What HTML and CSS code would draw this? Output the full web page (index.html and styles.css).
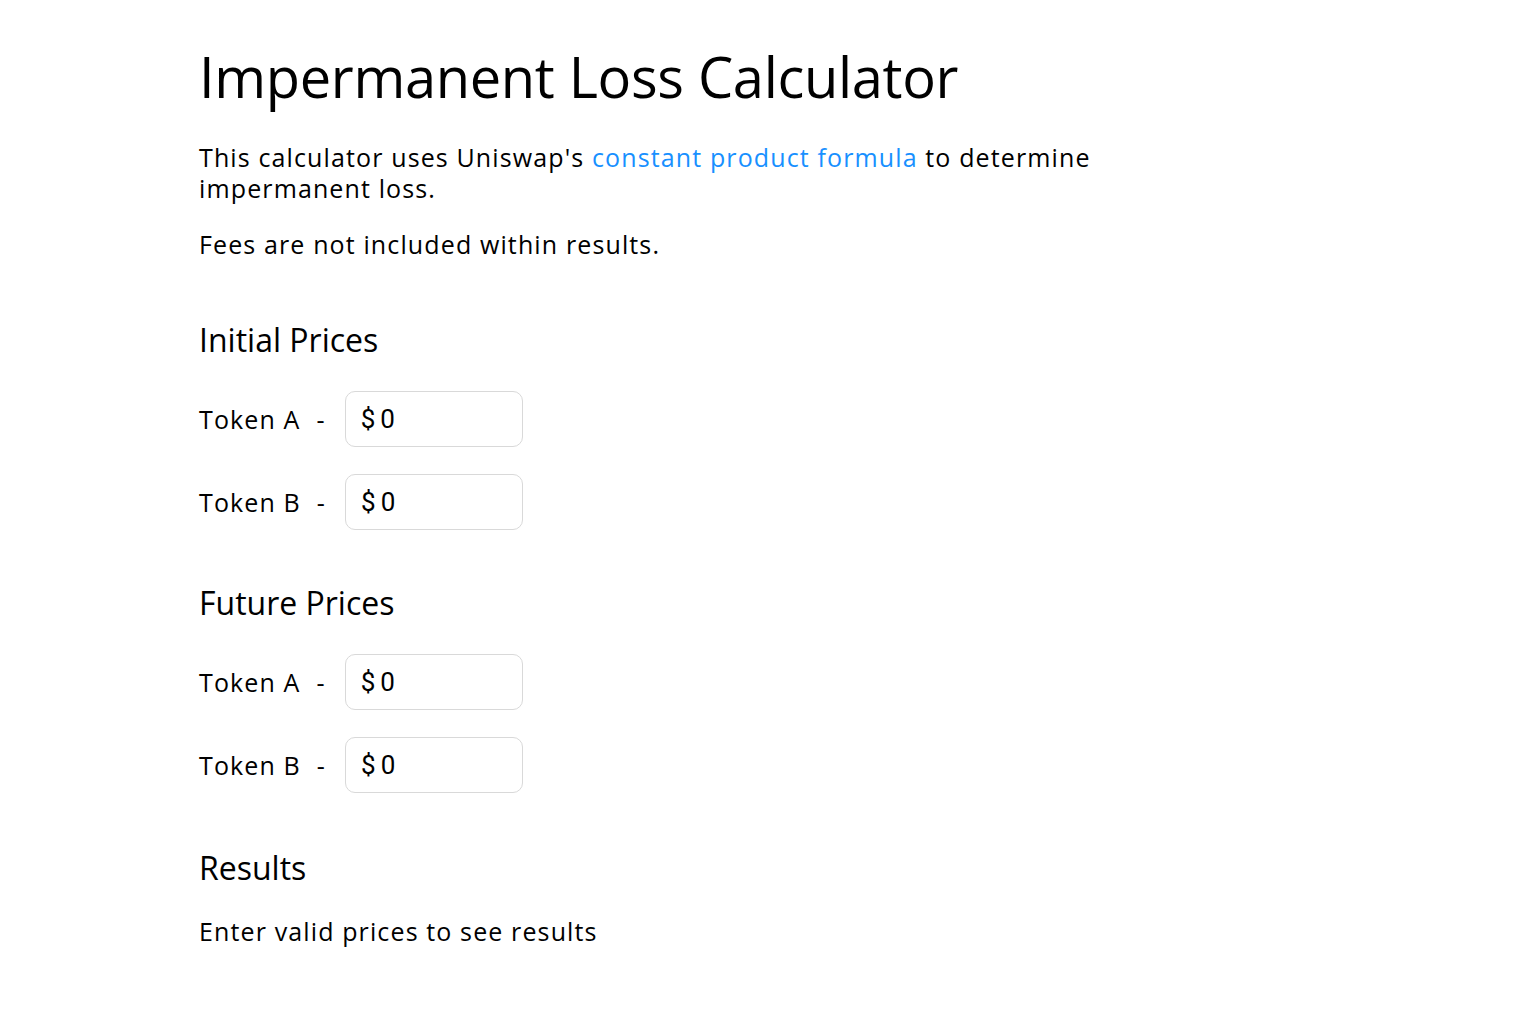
FILE: index.html
```html
<!DOCTYPE html>
<html lang="en">
<head>
<meta charset="utf-8">
<title>Impermanent Loss Calculator</title>
<link rel="stylesheet" href="styles.css">
</head>
<body>
<main class="page">
  <h1 class="title">Impermanent Loss Calculator</h1>
  <p class="intro">This calculator uses Uniswap's <a class="link" href="#">constant product formula</a> to determine impermanent loss.</p>
  <p class="note">Fees are not included within results.</p>

  <section class="group group-first">
    <h2 class="group-title">Initial Prices</h2>
    <div class="rows">
      <div class="row"><span class="label">Token A</span><span class="dash">-</span><div class="field"><span class="prefix">$</span><span class="value">0</span></div></div>
      <div class="row"><span class="label">Token B</span><span class="dash">-</span><div class="field"><span class="prefix">$</span><span class="value">0</span></div></div>
    </div>
  </section>

  <section class="group">
    <h2 class="group-title">Future Prices</h2>
    <div class="rows">
      <div class="row"><span class="label">Token A</span><span class="dash">-</span><div class="field"><span class="prefix">$</span><span class="value">0</span></div></div>
      <div class="row"><span class="label">Token B</span><span class="dash">-</span><div class="field"><span class="prefix">$</span><span class="value">0</span></div></div>
    </div>
  </section>

  <section class="group group-last">
    <h2 class="group-title">Results</h2>
    <p class="result">Enter valid prices to see results</p>
  </section>
</main>
</body>
</html>
```

FILE: styles.css
```css
* { box-sizing: border-box; }
html, body { margin: 0; padding: 0; background: #fff; }
body {
  font-family: "Open Sans", "Liberation Sans", sans-serif;
  color: #000;
}
.page {
  width: 1128px;
  margin: 0 auto;
  padding-top: 38px;
}
.title {
  font-size: 56px;
  font-weight: 400;
  line-height: 76px;
  letter-spacing: -0.33px;
  margin: 0 0 28px;
}
.intro, .note, .result, .label, .dash {
  font-size: 25px;
  line-height: 31px;
  letter-spacing: 0.045em;
}
.intro, .note, .result { margin: 0; }
.intro { max-width: 930px; margin-bottom: 25px; }
.link { color: #1890ff; text-decoration: none; }
.group { margin-top: 53px; }
.group-first { margin-top: 60px; }
.group-last { margin-top: 55px; }
.group-title {
  font-size: 32px;
  font-weight: 400;
  line-height: 40px;
  margin: 0 0 31px;
}
.group-title + .result { margin-top: -3px; }
.rows { display: flex; flex-direction: column; gap: 27px; }
.row { display: flex; align-items: center; height: 56px; }
.dash { margin-left: 16px; margin-right: 19px; }
.field {
  width: 178px;
  height: 56px;
  border: 1px solid #d9d9d9;
  border-radius: 10px;
  display: flex;
  align-items: center;
  padding-left: 15px;
  font-family: Roboto, "Noto Sans", sans-serif;
  font-size: 26px;
}
.prefix { margin-right: 5px; }
```
